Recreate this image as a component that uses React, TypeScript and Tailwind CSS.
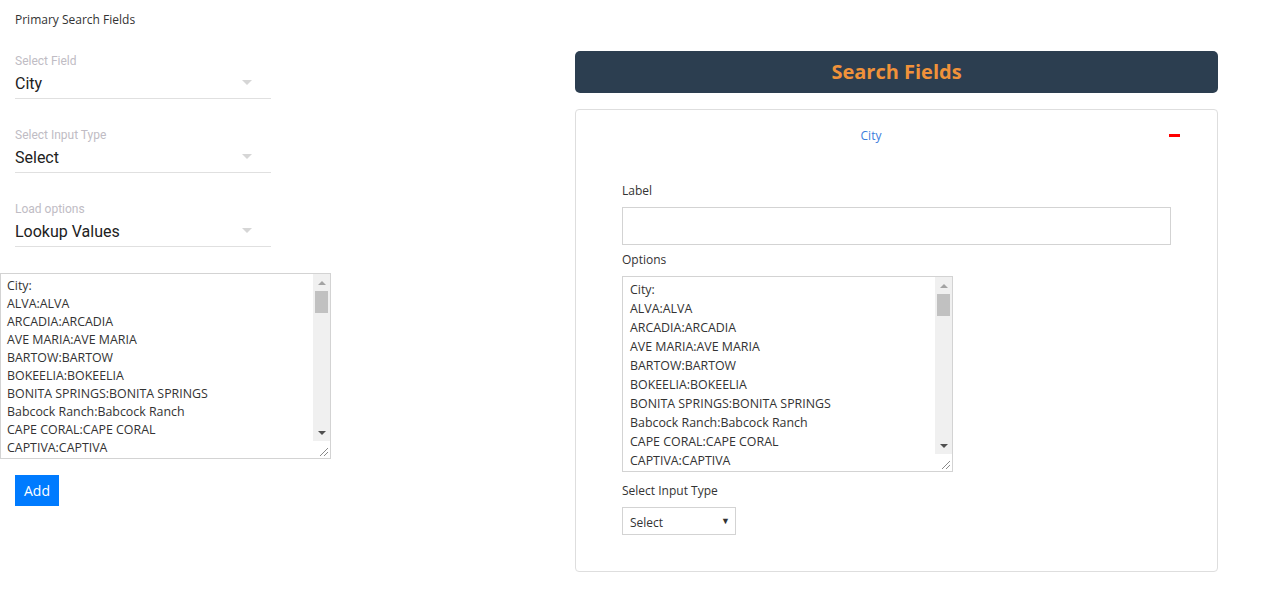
const CITIES = [
  "City:",
  "ALVA:ALVA",
  "ARCADIA:ARCADIA",
  "AVE MARIA:AVE MARIA",
  "BARTOW:BARTOW",
  "BOKEELIA:BOKEELIA",
  "BONITA SPRINGS:BONITA SPRINGS",
  "Babcock Ranch:Babcock Ranch",
  "CAPE CORAL:CAPE CORAL",
  "CAPTIVA:CAPTIVA",
];

const UI_FONT = "font-['Open_Sans','Noto_Sans',sans-serif]";

function MaterialSelect({ label, value }: { label: string; value: string }) {
  return (
    <div className="w-[256px] font-['Roboto',sans-serif]">
      <div className="h-[16px] pt-[1px] text-[12px] leading-[16px] text-[#c0bcc4]">{label}</div>
      <div className="mt-[3px] flex h-[28px] items-start justify-between border-b border-[#e0e0e0]">
        <span className="pt-[1px] text-[16px] leading-[24px] text-[#212121]">{value}</span>
        <svg width="10" height="5" viewBox="0 0 10 5" className="mr-[19px] mt-[9px]">
          <path d="M0 0 L10 0 L5 5 Z" fill="#d6d6d6" />
        </svg>
      </div>
    </div>
  );
}

function ScrollBar() {
  return (
    <div className="flex w-[17px] shrink-0 flex-col bg-[#f0f0f0]">
      <div className="flex h-[17px] items-center justify-center">
        <svg width="8" height="4" viewBox="0 0 8 4">
          <path d="M0 4 L8 4 L4 0 Z" fill="#a3a3a3" />
        </svg>
      </div>
      <div className="mx-[2px] h-[22px] bg-[#c1c1c1]" />
      <div className="flex-1" />
      <div className="flex h-[17px] items-center justify-center">
        <svg width="8" height="4" viewBox="0 0 8 4">
          <path d="M0 0 L8 0 L4 4 Z" fill="#505050" />
        </svg>
      </div>
      <div className="flex h-[17px] items-end justify-end bg-white pb-[2px] pr-[2px]">
        <svg width="9" height="9" viewBox="0 0 9 9">
          <path d="M9 1 L1 9 M9 5 L5 9" stroke="#8a8a8a" strokeWidth="1" />
        </svg>
      </div>
    </div>
  );
}

function OptionsBox({ tall }: { tall?: boolean }) {
  return (
    <div
      className={`flex w-[331px] border border-[#d3d3d3] bg-white ${
        tall ? "h-[196px]" : "h-[186px]"
      }`}
    >
      <div
        className={`flex-1 overflow-hidden text-[12.4px] text-[#333] ${
          tall ? "pl-[7px] pt-[3px] leading-[19px]" : "pl-[6px] pt-[3px] leading-[18px]"
        }`}
      >
        {CITIES.map((c) => (
          <div key={c} className="whitespace-nowrap">
            {c}
          </div>
        ))}
      </div>
      <ScrollBar />
    </div>
  );
}

export default function App() {
  return (
    <div className={`flex min-h-[589px] bg-white ${UI_FONT}`}>
      {/* Left column */}
      <div className="w-[575px] shrink-0 pt-[10px]">
        <div className="ml-[15px] h-[18px] pt-[1px] text-[12px] leading-[18px] text-[#333]">
          Primary Search Fields
        </div>
        <div className="ml-[15px] mt-[24px] flex flex-col gap-[27px]">
          <MaterialSelect label="Select Field" value="City" />
          <MaterialSelect label="Select Input Type" value="Select" />
          <MaterialSelect label="Load options" value="Lookup Values" />
        </div>
        <div className="mt-[26px]">
          <OptionsBox />
        </div>
        <button className="ml-[15px] mt-[16px] h-[31px] w-[44px] bg-[#007bff] text-[14px] text-white">
          Add
        </button>
      </div>

      {/* Right column */}
      <div className="w-[643px] shrink-0 pt-[51px]">
        <div className="flex h-[42px] items-center justify-center rounded-[5px] bg-[#2c3e50]">
          <span className="text-[20px] font-bold text-[#f0923a]">Search Fields</span>
        </div>
        <div className="mt-[16px] rounded-[4px] border border-[#dedede] pb-[36px] pt-[16px]">
          <div className="flex h-[18px] items-center">
            <div className="h-[18px] w-[590px] pt-[1px] text-center text-[12px] leading-[18px] text-[#3b7ddd]">
              City
            </div>
            <div className="ml-[3px] h-[3px] w-[11px] bg-[#ff0000]" />
          </div>
          <div className="px-[46px]">
            <div className="mt-[37px] h-[18px] pt-[1px] text-[12px] leading-[18px] text-[#333]">Label</div>
            <div className="mt-[8px] h-[38px] w-full border border-[#d3d3d3] bg-white" />
            <div className="mt-[5px] h-[18px] pt-[1px] text-[12px] leading-[18px] text-[#333]">Options</div>
            <div className="mt-[8px]">
              <OptionsBox tall />
            </div>
            <div className="mt-[9px] h-[18px] pt-[1px] text-[12px] leading-[18px] text-[#333]">
              Select Input Type
            </div>
            <div className="mt-[8px] flex h-[28px] w-[114px] items-center justify-between border border-[#d3d3d3] pl-[7px] pr-[5px] pt-[3px]">
              <span className="text-[12px] text-[#333]">Select</span>
              <span className="pb-[3px] text-[9px] text-[#333]">▼</span>
            </div>
          </div>
        </div>
      </div>
    </div>
  );
}
